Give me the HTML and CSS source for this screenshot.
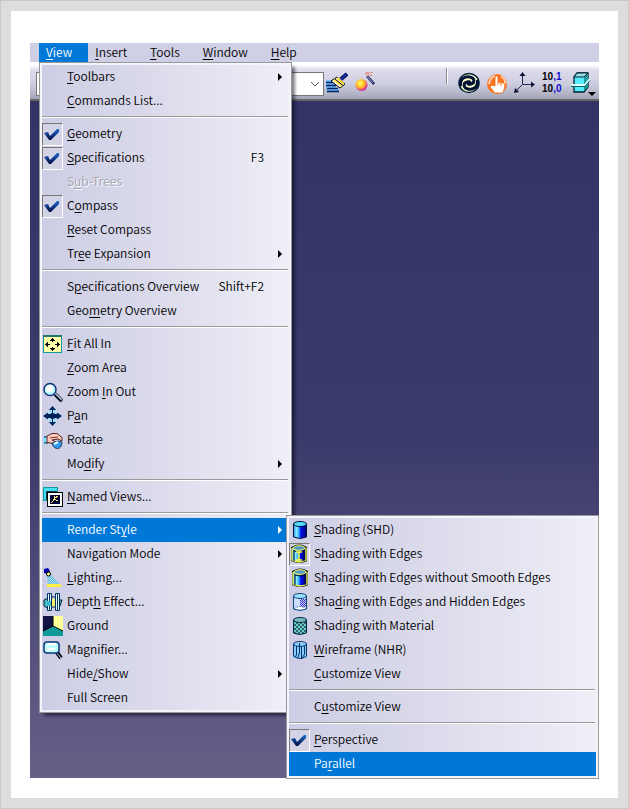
FILE: index.html
```html
<!DOCTYPE html>
<html lang="en">
<head>
<meta charset="utf-8">
<title>View menu</title>
<link rel="stylesheet" href="styles.css">
</head>
<body>
<svg class="defs" aria-hidden="true">
  <defs>
    <linearGradient id="blueCyl"><stop offset="0" stop-color="#29f"/><stop offset=".25" stop-color="#8ef"/><stop offset=".45" stop-color="#29f"/><stop offset=".55" stop-color="#01e"/><stop offset="1" stop-color="#007"/></linearGradient>
    <linearGradient id="tick" x1="0" y1="0" x2="0" y2="1"><stop offset="0" stop-color="#1d6fc8"/><stop offset=".6" stop-color="#0a2f7c"/><stop offset="1" stop-color="#04103c"/></linearGradient>
    <radialGradient id="ball" cx=".4" cy=".35" r=".7"><stop offset="0" stop-color="#ff6"/><stop offset=".5" stop-color="#fb2"/><stop offset="1" stop-color="#c0b"/></radialGradient>
    <pattern id="checker" width="4" height="4" patternUnits="userSpaceOnUse"><path fill="#6cc" d="M0 0h4v4H0z"/><path fill="#366" d="M0 0h2v2H0zM2 2h2v2H2z"/></pattern>
    <pattern id="dither" width="2" height="2" patternUnits="userSpaceOnUse"><path fill="#cce" d="M0 0h2v2H0z"/><path fill="#33c" d="M0 0h1v1H0zM1 1h1v1H1z"/></pattern>
    <pattern id="beam" width="2" height="2" patternUnits="userSpaceOnUse"><path fill="#bde" d="M0 0h2v2H0z"/><path fill="#5bd" d="M0 0h1v1H0zM1 1h1v1H1z"/></pattern>
  </defs>
  <symbol id="i-check" viewBox="0 0 20 20"><path fill="url(#tick)" d="M2 9l4-1 2 4 7-7h2v3L9 16H7z"/></symbol>
</svg>

<main class="frame">
<div class="app">
  <nav class="menubar" aria-label="Main menu">
    <div class="top-item">
      <button class="top-button active" type="button"><u>V</u>iew</button>
      <div class="menu view-menu" role="menu">
        <button class="item" type="button"><span class="icon"></span><span class="label"><u>T</u>oolbars</span><i class="arrow"></i></button>
        <button class="item" type="button"><span class="icon"></span><span class="label"><u>C</u>ommands List...</span></button>
        <hr>
        <button class="item" type="button"><span class="icon checked"><svg><use href="#i-check"/></svg></span><span class="label"><u>G</u>eometry</span></button>
        <button class="item" type="button"><span class="icon checked"><svg><use href="#i-check"/></svg></span><span class="label"><u>S</u>pecifications</span><span class="shortcut">F3</span></button>
        <button class="item" type="button" disabled><span class="icon"></span><span class="label">S<u>u</u>b-Trees</span></button>
        <button class="item" type="button"><span class="icon checked"><svg><use href="#i-check"/></svg></span><span class="label">C<u>o</u>mpass</span></button>
        <button class="item" type="button"><span class="icon"></span><span class="label"><u>R</u>eset Compass</span></button>
        <button class="item" type="button"><span class="icon"></span><span class="label">Tr<u>e</u>e Expansion</span><i class="arrow"></i></button>
        <hr>
        <button class="item" type="button"><span class="icon"></span><span class="label">S<u>p</u>ecifications Overview</span><span class="shortcut">Shift+F2</span></button>
        <button class="item" type="button"><span class="icon"></span><span class="label">Geo<u>m</u>etry Overview</span></button>
        <hr>
        <button class="item" type="button"><span class="icon"><svg viewBox="0 0 20 20" shape-rendering="crispEdges"><path fill="#ffa" stroke="#199" d="M.5 1.500h18v17H.5z"/><path fill="#276" d="M0 1h19v2H0z"/><path d="M9 4h1v4H9zM9 13h1v4H9zM2 10h5v1H2zM12 10h5v1h-5zM8 5h3v1H8zM8 15h3v1H8zM3 9h1v3H3zM15 9h1v3h-1zM7 6h5v1H7zM7 14h5v1H7zM4 8h1v5H4zM14 8h1v5h-1z"/></svg></span><span class="label"><u>F</u>it All In</span></button>
        <button class="item" type="button"><span class="icon"></span><span class="label"><u>Z</u>oom Area</span></button>
        <button class="item" type="button"><span class="icon"><svg viewBox="0 0 20 20"><path d="M12 12l7 7" stroke="#013" stroke-width="4"/><path d="M12 11l7 7" stroke="#bcc" stroke-width="1.500"/><circle cx="7" cy="7.500" r="6" fill="#bff" stroke="#137" stroke-width="1.500"/><circle cx="6.500" cy="6.500" r="3.500" fill="#fff"/></svg></span><span class="label">Zoom <u>I</u>n Out</span></button>
        <button class="item" type="button"><span class="icon"><svg viewBox="0 0 20 20"><path d="M9.500 2v16M2 10h15" stroke="#9df" stroke-width="6"/><path fill="#025" d="M9.500 0L13 4h-3v4h4V6.500l5 3.500-5 3.500V12h-4v4h3l-3.500 4L6 16h3v-4H5v1.500L0 10l5-3.500V8h4V4H6z"/><circle cx="9.500" cy="10" r="3" fill="#025"/></svg></span><span class="label">P<u>a</u>n</span></button>
        <button class="item" type="button"><span class="icon"><svg viewBox="0 0 20 20"><path fill="#8df" d="M0 6h4v8H0z"/><path stroke="#124" d="M1 7h4M1 13h4"/><path fill="#fcb" stroke="#522" d="M4 6l5-2.500h5l5 4V11l-4-2-6 1 4 2-2 1.500-7-1z"/><path fill="none" stroke="#733" d="M7 8l8-1"/><path fill="#39e" stroke="#124" stroke-width=".8" d="M9 13l6-2 4 1c0 9-9 8-10 1z"/><path d="M11 14l4-2" stroke="#dff" stroke-width="2"/></svg></span><span class="label">Rotate</span></button>
        <button class="item" type="button"><span class="icon"></span><span class="label">Mo<u>d</u>ify</span><i class="arrow"></i></button>
        <hr>
        <button class="item" type="button"><span class="icon"><svg viewBox="0 0 20 20" shape-rendering="crispEdges"><path fill="#4de" stroke="#199" d="M.5.500h14v13H.5z"/><path fill="#588" stroke="#134" d="M3.500 4.500h10v8h-10z"/><path fill="#fff" stroke="#000" d="M4.500 5.500h15v14h-15z"/><path fill="#003" d="M7 8h10v9H7z"/><path fill="none" stroke="#fe6" d="M11.500 9v3l-3 4M11 12l4 2M12 11l3-2"/></svg></span><span class="label"><u>N</u>amed Views...</span></button>
        <hr>
        <div class="submenu-host">
          <button class="item active" type="button"><span class="icon"></span><span class="label">Render St<u>y</u>le</span><i class="arrow"></i></button>
          <div class="menu submenu" role="menu">
            <button class="item" type="button"><span class="icon"><svg viewBox="0 0 20 20"><path fill="url(#blueCyl)" stroke="#013" d="M3.500 4v13q6 3 13 0V4z"/><ellipse cx="10" cy="4" rx="6.500" ry="2.500" fill="#5df" stroke="#013"/></svg></span><span class="label"><u>S</u>hading (SHD)</span></button>
            <button class="item" type="button"><span class="icon checked"><svg viewBox="0 0 20 20"><path fill="#012" stroke="#012" stroke-width="3" d="M3.500 4v12q6 3 13 0V4q-6-4-13 0z"/><path fill="url(#blueCyl)" stroke="#ff4" stroke-width="1.300" d="M3 4v12q7 4 14 0V4"/><ellipse cx="10" cy="4" rx="6" ry="2.300" fill="#59c" stroke="#ff4"/><path fill="none" stroke="#012" d="M5 6v11M15 6v11M5 7q5 2 10 0"/><path d="M10 8v9M7 8h6M7 16h6" stroke="#ff4" stroke-width="1.500"/></svg></span><span class="label">S<u>h</u>ading with Edges</span></button>
            <button class="item" type="button"><span class="icon"><svg viewBox="0 0 20 20"><path fill="#012" stroke="#012" stroke-width="3" d="M3.500 4v12q6 3 13 0V4q-6-4-13 0z"/><path fill="url(#blueCyl)" stroke="#ff4" stroke-width="1.300" d="M3 4v12q7 4 14 0V4"/><ellipse cx="10" cy="4" rx="6" ry="2.300" fill="#59c" stroke="#ff4"/><path fill="none" stroke="#012" d="M5 6v11M15 6v11M5 7q5 2 10 0"/></svg></span><span class="label">Sh<u>a</u>ding with Edges without Smooth Edges</span></button>
            <button class="item" type="button"><span class="icon"><svg viewBox="0 0 20 20"><path fill="#cdf" stroke="#147" d="M3.500 4v13q6 3 13 0V4z"/><path fill="url(#dither)" d="M10 7h6v8h-6z"/><ellipse cx="10" cy="4" rx="6.500" ry="2.500" fill="#9df" stroke="#147"/><path fill="#fff" stroke="#58a" stroke-dasharray="2 1" d="M4 17q6-5 12 0"/></svg></span><span class="label">Sha<u>d</u>ing with Edges and Hidden Edges</span></button>
            <button class="item" type="button"><span class="icon"><svg viewBox="0 0 20 20"><path fill="url(#checker)" stroke="#024" d="M3.500 4v13q6 3 13 0V4z"/><ellipse cx="10" cy="4" rx="6.500" ry="2.500" fill="#7bb" stroke="#024"/></svg></span><span class="label">Shad<u>i</u>ng with Material</span></button>
            <button class="item" type="button"><span class="icon"><svg viewBox="0 0 20 20"><path fill="#8cf" d="M3 3h14v15H3z"/><g fill="none" stroke="#036"><path d="M3.500 4v12q7 5 13 0V4M6.500 6v9l-2 2M9.500 3v10l-2 5M11.500 6v13M14.500 6v8l-2 4"/><ellipse cx="10" cy="4" rx="6.500" ry="2.500"/></g></svg></span><span class="label"><u>W</u>ireframe (NHR)</span></button>
            <button class="item" type="button"><span class="icon"></span><span class="label"><u>C</u>ustomize View</span></button>
            <hr>
            <button class="item" type="button"><span class="icon"></span><span class="label">C<u>u</u>stomize View</span></button>
            <hr>
            <button class="item" type="button"><span class="icon checked"><svg><use href="#i-check"/></svg></span><span class="label"><u>P</u>erspective</span></button>
            <button class="item active" type="button"><span class="icon"></span><span class="label">Pa<u>r</u>allel</span></button>
          </div>
        </div>
        <button class="item" type="button"><span class="icon"></span><span class="label">Navigation Mode</span><i class="arrow"></i></button>
        <button class="item" type="button"><span class="icon"><svg viewBox="0 0 20 20"><path fill="url(#beam)" d="M4 8l4-2 9 11H5z"/><path fill="#fe4" d="M4 16h14v3H4z"/><path fill="#00a" d="M1 1l4-1 2 3-2 3-4-1z"/><circle cx="5.500" cy="6" r="2" fill="#ff8" stroke="#000"/></svg></span><span class="label"><u>L</u>ighting...</span></button>
        <button class="item" type="button"><span class="icon"><svg viewBox="0 0 20 20"><path fill="#4bc" stroke="#023" d="M1 8l4-2 3 3v6l-4 1-3-2zM14 8h5l-2 6h-3z"/><path fill="#fe6" d="M9 7h5v8H9z"/><path fill="#dff" stroke="#036" d="M4.500 1.500h4v17h-4zM12.500 1.500h4v17h-4z"/><path stroke="#136" d="M6.500 1v18M14.500 1v18M9 5h4M9 15h4"/><path fill="#4bc" d="M4 9h4v5H4z"/></svg></span><span class="label">Dept<u>h</u> Effect...</span></button>
        <button class="item" type="button"><span class="icon"><svg viewBox="0 0 20 20"><path fill="#ff9" d="M10 0h10v20H10z"/><path fill="#114" d="M0 0h10v12L0 16z"/><path fill="#199" d="M0 15l10-5 10 5v5H0z"/><path fill="none" stroke="#000" d="M10 0v10M0 15l10-5 10 5"/></svg></span><span class="label">Ground</span></button>
        <button class="item" type="button"><span class="icon"><svg viewBox="0 0 20 20"><path d="M13 11l5 7" stroke="#012" stroke-width="4"/><path d="M14 13l4 5" stroke="#ccd"/><rect x="1" y="2" width="15" height="11" rx="3" fill="#bff" stroke="#137" stroke-width="1.500"/><path fill="none" stroke="#fff" stroke-width="2" d="M4 6l3-2h6M4 10l3-1h5"/></svg></span><span class="label">Magnifier...</span></button>
        <button class="item" type="button"><span class="icon"></span><span class="label">Hide<u>/</u>Show</span><i class="arrow"></i></button>
        <button class="item" type="button"><span class="icon"></span><span class="label">Full Screen</span></button>
      </div>
    </div>
    <button class="top-button" type="button"><u>I</u>nsert</button>
    <button class="top-button" type="button"><u>T</u>ools</button>
    <button class="top-button" type="button"><u>W</u>indow</button>
    <button class="top-button" type="button"><u>H</u>elp</button>
  </nav>

  <div class="toolbar">
    <div class="tools">
      <div class="combo">
        <select aria-label="Style"><option></option></select>
        <svg class="chevron" viewBox="0 0 10 6"><path fill="none" stroke="#555" d="M1 1l4 4 4-4"/></svg>
      </div>
      <div class="tools brushes">
        <button class="tool" type="button" aria-label="Painter"><svg viewBox="0 0 22 22"><path stroke="#5bf" stroke-width="1.500" d="M0 9h8M0 12h9M0 15h10M0 18h13"/><path stroke="#026" stroke-width="1.300" d="M0 10.500h8M0 13.500h10M1 16.500h11M1 19.500h12"/><path fill="#fff" stroke="#000" d="M5 9l6-4 8 7-5 4z"/><path stroke="#fd3" stroke-width="2" d="M8 8l8 6M11 6l7 6"/><path stroke="#000" d="M9 7l8 6.500"/><path stroke="#003" stroke-width="4" d="M15 7l6-5"/><path stroke="#13b" stroke-width="2" d="M15 7l6-5"/></svg></button>
        <button class="tool" type="button" aria-label="Wizard"><svg viewBox="0 0 22 22"><circle cx="6.500" cy="13" r="6" fill="url(#ball)"/><path stroke="#114" stroke-width="2.500" d="M12 4l7 8"/><path stroke="#9bf" d="M12 4l6 7"/><path stroke="#e64" stroke-dasharray="2 1" d="M10 2l8-2M12 4l6-1M11 0l3 2"/></svg></button>
      </div>
    </div>
    <div class="tools right">
      <span class="grip"></span>
      <button class="tool" type="button" aria-label="Update"><svg viewBox="0 0 22 22"><ellipse cx="11" cy="11" rx="10" ry="9.500" fill="#ffc" stroke="#023" stroke-width="1.500"/><g fill="none" stroke="#013" stroke-width="3" stroke-linecap="round"><path d="M2.500 13C2 6 8 4 12 5c5 1 5 6 1 7-3 1-4-1-2-2"/><path d="M19.500 9c.5 7-5.500 9-9.500 8-5-1-5-6-1-7 3-1 4 1 2 2"/></g></svg></button>
      <button class="tool" type="button" aria-label="Pick"><svg viewBox="0 0 22 22"><circle cx="11" cy="12" r="10" fill="#f72"/><path fill="none" stroke="#fca" stroke-width="2" d="M3 12q1-7 6-8M15 4q5 3 4 8"/><path fill="#fff" stroke="#e61" stroke-width=".8" d="M9 14V6q0-2 1.500-2T12 6v4l5 1q2 0 2 3l-2 7H9l-5-6q1-3 5-1z"/><path stroke="#f72" d="M12 10v3M15 11v3"/></svg></button>
      <button class="tool" type="button" aria-label="Axis system"><svg viewBox="0 0 22 22"><path fill="none" stroke="#225" d="M8.500 2v10.500H20M8.500 12.500L2 19"/><path fill="#113" d="M8.500 0l3 4h-6zM21 12.500l-4 3v-6zM0 21l1-5 4 4z"/></svg></button>
      <button class="tool digits" type="button"><span>10<b>,1</b></span><span>10<b>,0</b></span></button>
      <button class="tool" type="button" aria-label="Solid view"><svg viewBox="0 0 22 22"><path fill="#5ef" stroke="#023" stroke-width="1.300" d="M4 5l3-4h11v14l-4 5H4z"/><path fill="#299" d="M14 5l4-4v14l-4 4z"/><path fill="#9dd" stroke="#023" d="M4 5l3-4h11l-4 4z"/><path fill="none" stroke="#dff" stroke-width="2" d="M1 13h14l5-6"/><path fill="none" stroke="#066" d="M1 14.500h14l5-6"/></svg><i class="drop"></i></button>
    </div>
  </div>
  <div class="viewport"></div>
</div>
</main>
</body>
</html>
```
FILE: styles.css
```css
* {
  box-sizing: border-box;
}

body {
  margin: 0;
  font: 350 12px/16px "Noto Sans CJK KR", "Noto Sans", sans-serif;
  color: #000;
}

button {
  margin: 0;
  padding: 0;
  border: 0;
  background: none;
  color: inherit;
  font: inherit;
  text-align: left;
  white-space: nowrap;
}

u {
  text-underline-offset: 2px;
}

.defs {
  position: absolute;
  width: 0;
  height: 0;
}

.frame {
  display: flex;
  min-height: 100vh;
  padding: 32px 19px 20px;
  border: 11px solid #ddd;
  outline: 1px solid #c8c8c8;
  outline-offset: -1px;
  background: #fff;
}

.app {
  display: flex;
  flex: 1;
  flex-direction: column;
}

.menubar {
  display: flex;
  height: 19px;
  padding-left: 9px;
  background: #cfcfe5;
}

.top-item {
  position: relative;
  display: flex;
}

.top-button {
  padding: 0 16px 2px 7px;
}

.active {
  background: #0078d7;
  color: #fff;
}

.menu {
  position: absolute;
  z-index: 1;
  padding: 2px;
  border: 1px solid #999;
  background: linear-gradient(90deg, #cdcde5, #dcdcec 50%, #efeff8) content-box, #f4f4fa;
}

.view-menu {
  top: 19px;
  left: 0;
  width: 253px;
  box-shadow: 4px 4px 3px -1px rgba(0, 0, 20, 0.5);
}

.submenu-host {
  position: relative;
}

.submenu {
  top: -3px;
  left: 244px;
  width: 313px;
}

.item {
  display: flex;
  align-items: center;
  gap: 4px;
  width: 100%;
  height: 24px;
  padding-right: 7px;
}

.item:disabled {
  color: #a3a3ae;
  text-shadow: 1px 1px #fff;
}

.icon {
  display: flex;
  align-items: center;
  justify-content: flex-end;
  width: 21px;
  height: 23px;
}

.icon svg {
  flex: none;
  width: 20px;
  height: 20px;
}

.checked {
  border: 1px solid;
  border-color: #777 #fff #fff #777;
  background: #d3d3e5;
}

.label,
.shortcut {
  padding-bottom: 2px;
}

.label {
  flex: 1;
}

.shortcut {
  padding-right: 18px;
}

.arrow {
  border: solid transparent;
  border-width: 4px 0 4px 4px;
  border-left-color: #000;
}

.active .arrow {
  border-left-color: #fff;
}

hr {
  height: 2px;
  margin: 3px 1px 4px 0;
  border: 0;
  border-top: 1px solid #999;
  background: #fff;
}

.toolbar {
  display: flex;
  justify-content: space-between;
  height: 39px;
  padding: 6px 7px 0 6px;
  border-bottom: 2px solid #666;
  background: linear-gradient(#fff 3px, #dcdcec 8px, #cdcde0 60%, #a5a5b8);
}

.tools {
  display: flex;
  align-items: center;
  gap: 2px;
}

.brushes {
  gap: 7px;
}

.right {
  gap: 6px;
}

.combo {
  position: relative;
  width: 288px;
  height: 24px;
}

.combo select {
  appearance: none;
  width: 100%;
  height: 100%;
  border: 1px solid #777;
  border-radius: 0;
  background: #fff;
}

.chevron {
  position: absolute;
  top: 9px;
  right: 4px;
  width: 10px;
  height: 6px;
}

.tool {
  position: relative;
  width: 22px;
  height: 24px;
}

.tool svg {
  width: 22px;
  height: 22px;
}

.grip {
  align-self: flex-start;
  width: 2px;
  height: 16px;
  margin-right: 4px;
  border-left: 1px solid #888;
  background: #fff;
}

.digits {
  display: grid;
  font: bold 10px/10px "Liberation Sans", sans-serif;
}

.digits b {
  color: #11c;
}

.drop {
  position: absolute;
  right: -4px;
  bottom: 0;
  border: solid transparent;
  border-width: 4px 4px 0;
  border-top-color: #000;
}

.viewport {
  flex: 1;
  background: linear-gradient(#333366, #3b3b6b 50%, #666088);
}
```
